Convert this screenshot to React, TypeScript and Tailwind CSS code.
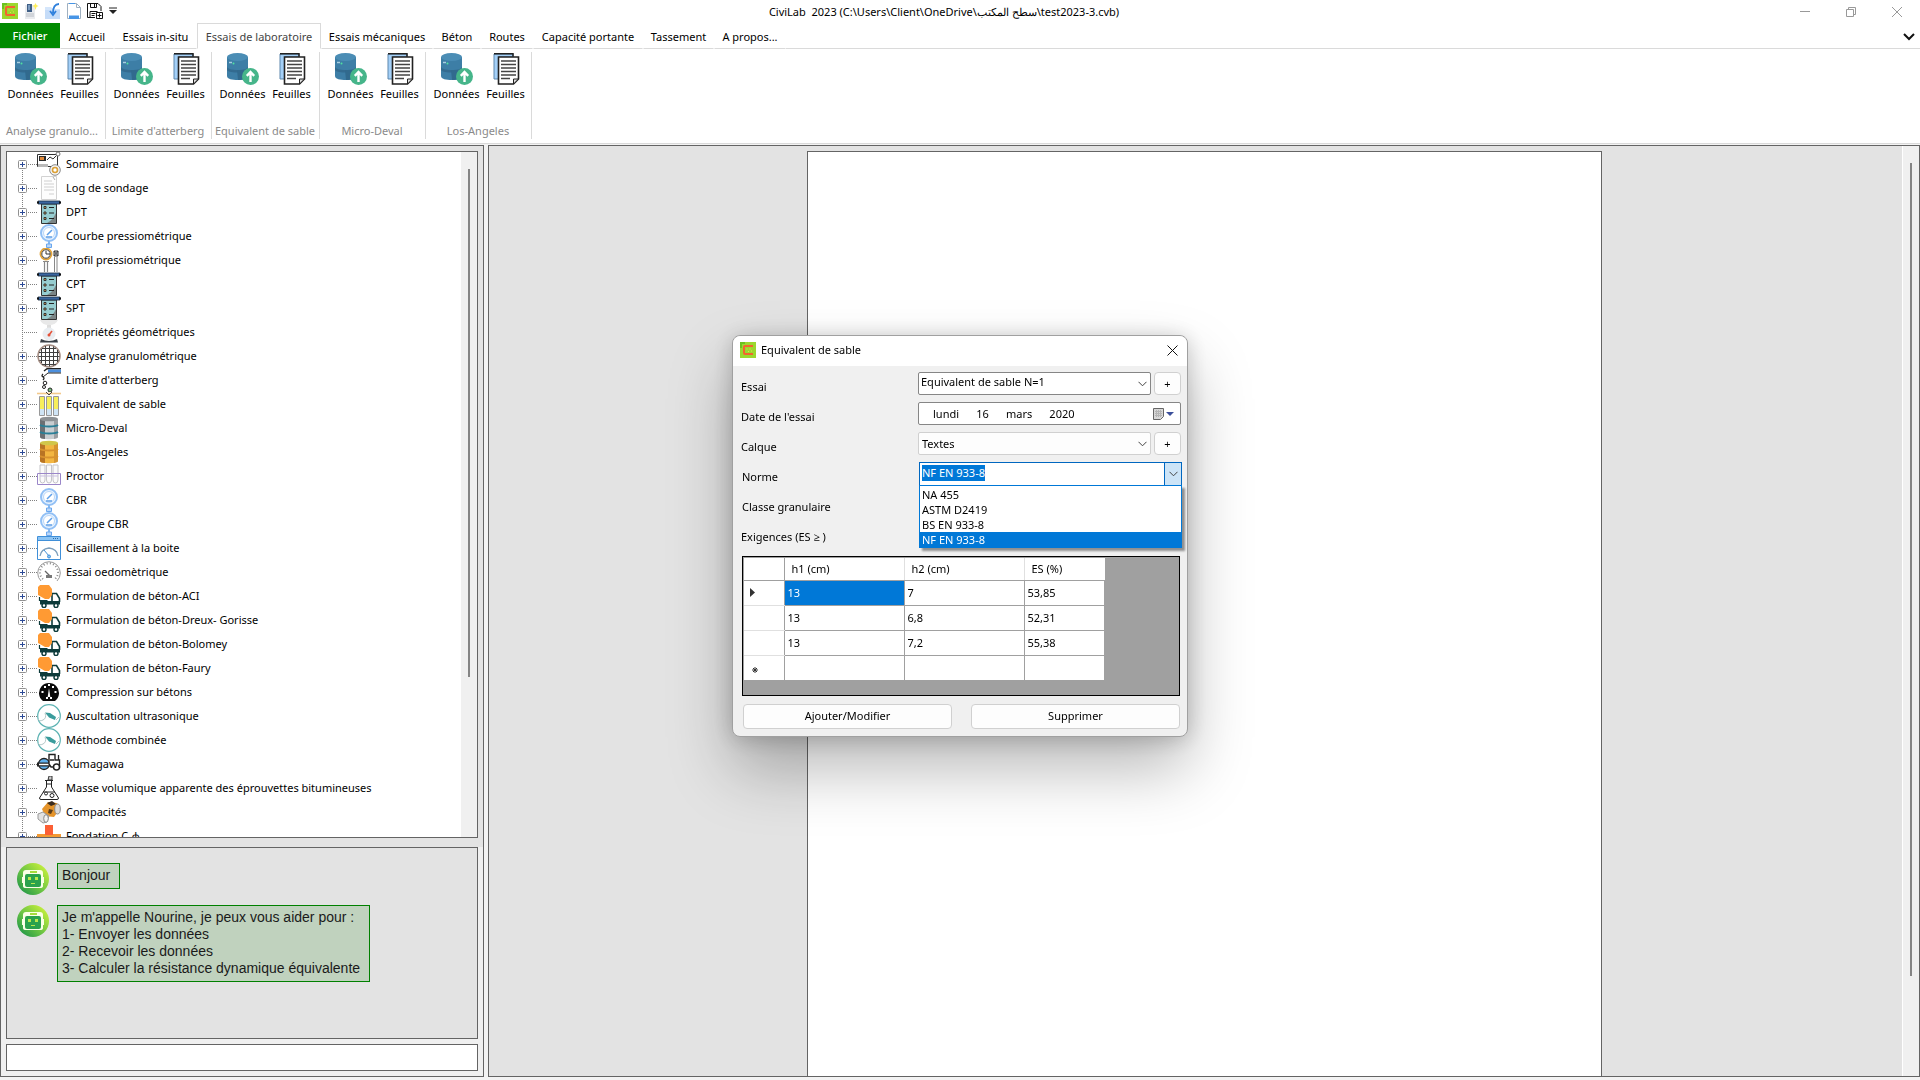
import React, { useEffect, useRef, useState } from "react";

type IconKind =
  | "summary"
  | "log"
  | "probe"
  | "gauge"
  | "profile"
  | "scale"
  | "sieve"
  | "limit"
  | "tubes"
  | "drumGray"
  | "drumGold"
  | "proctor"
  | "shear"
  | "oedo"
  | "mixer"
  | "dial"
  | "ultra"
  | "roller"
  | "flask"
  | "compactor"
  | "foundation";

interface TreeItem {
  label: string;
  icon: IconKind;
  leaf?: boolean;
}

const TREE_ITEMS: TreeItem[] = [
  { label: "Sommaire", icon: "summary" },
  { label: "Log de sondage", icon: "log" },
  { label: "DPT", icon: "probe" },
  { label: "Courbe pressiométrique", icon: "gauge" },
  { label: "Profil pressiométrique", icon: "profile" },
  { label: "CPT", icon: "probe" },
  { label: "SPT", icon: "probe" },
  { label: "Propriétés géométriques", icon: "scale", leaf: true },
  { label: "Analyse granulométrique", icon: "sieve" },
  { label: "Limite d'atterberg", icon: "limit" },
  { label: "Equivalent de sable", icon: "tubes" },
  { label: "Micro-Deval", icon: "drumGray" },
  { label: "Los-Angeles", icon: "drumGold" },
  { label: "Proctor", icon: "proctor" },
  { label: "CBR", icon: "gauge" },
  { label: "Groupe CBR", icon: "gauge" },
  { label: "Cisaillement à la boite", icon: "shear" },
  { label: "Essai oedomètrique", icon: "oedo" },
  { label: "Formulation de béton-ACI", icon: "mixer" },
  { label: "Formulation de béton-Dreux- Gorisse", icon: "mixer" },
  { label: "Formulation de béton-Bolomey", icon: "mixer" },
  { label: "Formulation de béton-Faury", icon: "mixer" },
  { label: "Compression sur bétons", icon: "dial" },
  { label: "Auscultation ultrasonique", icon: "ultra" },
  { label: "Méthode combinée", icon: "ultra" },
  { label: "Kumagawa", icon: "roller" },
  { label: "Masse volumique apparente des éprouvettes bitumineuses", icon: "flask" },
  { label: "Compacités", icon: "compactor" },
  { label: "Fondation C-φ", icon: "foundation" },
];

const TABS = [
  { label: "Accueil", width: "w-[54px]" },
  { label: "Essais in-situ", width: "w-[83px]" },
  { label: "Essais de laboratoire", width: "w-[124px]" },
  { label: "Essais mécaniques", width: "w-[112px]" },
  { label: "Béton", width: "w-[48px]" },
  { label: "Routes", width: "w-[52px]" },
  { label: "Capacité portante", width: "w-[110px]" },
  { label: "Tassement", width: "w-[71px]" },
  { label: "A propos...", width: "w-[72px]" },
];

const RIBBON_GROUPS = [
  { name: "Analyse granulo...", width: "w-[106px]" },
  { name: "Limite d'atterberg", width: "w-[106px]" },
  { name: "Equivalent de sable", width: "w-[108px]" },
  { name: "Micro-Deval", width: "w-[106px]" },
  { name: "Los-Angeles", width: "w-[106px]" },
];

const NORMS = ["NA 455", "ASTM D2419", "BS EN 933-8", "NF EN 933-8"];

const ROWS = [
  ["13", "7", "53,85"],
  ["13", "6,8", "52,31"],
  ["13", "7,2", "55,38"],
];

function AppLogo() {
  return (
    <svg width="16" height="16" viewBox="0 0 16 16" className="shrink-0">
      <rect width="16" height="16" fill="#9bd82f" />
      <path d="M0 0h5v2H2v4H0z" fill="#6cc11f" />
      <path d="M13 4H5Q4 4 4 5v6q0 1 1 1h8" fill="none" stroke="#f4632f" strokeWidth="2" />
      <path d="M6.500 7h1M9.500 7h1M11 9h1M8 9.500h1" stroke="#e6e04a" />
    </svg>
  );
}

function DataIcon() {
  return (
    <svg width="32" height="32" viewBox="0 0 32 32">
      <path d="M0 4v19c0 3 5 4 11 4s10-1 10-4V4z" fill="#3d7ea6" />
      <path d="M0 13c0 3 5 4 11 4s10-1 10-4v4c-2 2-6 2.500-10 2.500S1 19 0 17z" fill="#336b90" />
      <path d="M10 17h11v7c0 2-5 3-10 3z" fill="#316a8e" />
      <ellipse cx="10.500" cy="4" rx="10.500" ry="4" fill="#4b8db5" />
      <path d="M2 9.500h3" stroke="#a9cfe0" strokeWidth="1.500" />
      <circle cx="6.500" cy="10.500" r="1" fill="#4fe0a0" />
      <circle cx="23.500" cy="23.500" r="8.500" fill="#46b58a" />
      <path d="M23.500 29v-9M19.800 22.800l3.700-3.800 3.700 3.800" fill="none" stroke="#fff" strokeWidth="2.400" />
    </svg>
  );
}

function SheetsIcon() {
  return (
    <svg width="32" height="32" viewBox="0 0 32 32">
      <path d="M4 1h19v3H9v22H4z" fill="#a4d0f8" stroke="#5c87ad" strokeWidth="1" />
      <path d="M4 .8h19v3" fill="none" stroke="#222" strokeWidth="1.500" />
      <path d="M8.500 4h20v22l-5 5h-15z" fill="#fff" stroke="#222" strokeWidth="1.600" />
      <path
        d="M11 8h15M11 11.500h15M11 15h15M11 18.500h15M11 22h15M11 25.500h9"
        stroke="#444"
        strokeWidth="1.400"
      />
      <path d="M23.500 31v-5h5z" fill="#ddd" stroke="#222" />
    </svg>
  );
}

function QuickNew() {
  return (
    <svg width="15" height="16" viewBox="0 0 15 16">
      <path d="M1 2h10v14H1z" fill="#e9ebee" />
      <path d="M3 1h5v8H3z" fill="#3f5f86" />
      <path d="M4 2h2v5H4z" fill="#7d9dc0" />
      <path d="M2 11h8M2 13h8" stroke="#b9bec6" />
      <path d="M11.500 0l1 2 2 1-2 1-1 3-1-3-2-1 2-1z" fill="#ffef5a" />
    </svg>
  );
}

function QuickOpen() {
  return (
    <svg width="16" height="16" viewBox="0 0 16 16">
      <path d="M0 4h6l2 2h7v10H0z" fill="#d5e6fb" />
      <path d="M0 7h15v9H0z" fill="#c5dcf8" />
      <path d="M14 1Q8 1 8 10M5 8l3 4 3-4" fill="none" stroke="#2f80dc" strokeWidth="1.800" />
    </svg>
  );
}

function QuickDoc() {
  return (
    <svg width="14" height="16" viewBox="0 0 14 16">
      <path d="M.5.5h9l4 4v11H.5z" fill="#fff" stroke="#9fb0c0" />
      <path d="M9.500.5v4h4" fill="none" stroke="#9fb0c0" />
      <path d="M2 .5h6" stroke="#4795e6" />
      <path d="M2 12.500h10V16H2z" fill="#4795e6" />
    </svg>
  );
}

function QuickSave() {
  return (
    <svg width="16" height="16" viewBox="0 0 16 16" fill="none" stroke="#111">
      <path d="M14 8V3.500L11 .5H.5v14H8" />
      <path d="M3.500.5v4h6v-4M7.500 1v3M3 14V8.500h7.500M4.500 10.500h4M4.500 12.500h3" />
      <path d="M9.500 9.500h6v6h-6zM12.500 10.500v4M10.500 12.500h4" />
    </svg>
  );
}

function drum(body: string, dark: string, top: string, band: string) {
  return (
    <>
      <path d="M3 3v18c0 3 18 3 18 0V3z" fill={body} />
      <path d="M3 3v18c0 1 2 2 5 2V3z" fill={dark} />
      <path d="M17 4v19c3-.5 4-1 4-2V3z" fill={dark} opacity=".5" />
      <ellipse cx="12" cy="3" rx="9" ry="2.300" fill={top} />
      <path d="M3 9c3 2 15 2 18 0M3 16c3 2 15 2 18 0" fill="none" stroke={band} strokeWidth="2" />
    </>
  );
}

const ICONS: Record<IconKind, React.ReactNode> = {
  summary: (
    <>
      <path d="M.5 2.500h20v12H.5z" fill="#fff" stroke="#333" />
      <path d="M2 4h7v5H2z" fill="#2b2b2b" />
      <path d="M3 5h4v3H3z" fill="#e08a3c" />
      <path d="M1 12h10v3H1z" fill="#b9b9b9" />
      <path d="M10 8l3-3 3 2 5-5" fill="none" stroke="#333" />
      <circle cx="21" cy="2" r="2" fill="#fff" stroke="#777" />
      <circle cx="18" cy="18" r="5.300" fill="#f4f4f4" stroke="#8a8a8a" />
      <circle cx="18" cy="18" r="2.500" fill="#fff" stroke="#dba035" strokeWidth="1.600" />
    </>
  ),
  log: (
    <>
      <path d="M4.500.5h15v23h-15z" fill="#fdfdfd" stroke="#d2d2d2" />
      <path d="M7 5h8M7 8h10M7 11h10M7 14h10M12 18h5" stroke="#cfcfcf" />
      <path d="M16 1l2 3" stroke="#aaa" />
    </>
  ),
  probe: (
    <>
      <path d="M4.500 4h15v19.500h-15z" fill="#97cdd0" stroke="#333" />
      <path d="M19 13v10h-9q6-3 9-10z" fill="#7b8586" />
      <path d="M1 1h22v3H1z" fill="#3a66a0" stroke="#1b2d44" strokeWidth=".8" />
      <path d="M0 2.500h2M22 2.500h2" stroke="#111" strokeWidth="2" />
      <path d="M12 7.500h5M12 13h5M12 18.500h5" stroke="#222" />
      <path d="M7 6.500h2v2H7zM7 12h2v2H7zM7 17.500h2v2H7z" fill="#f2b25a" stroke="#333" />
    </>
  ),
  gauge: (
    <>
      <circle cx="12" cy="9" r="8" fill="#eaf4ff" stroke="#92c0f5" strokeWidth="2" />
      <circle cx="12" cy="9" r="5.500" fill="#fff" stroke="#b9d6f8" />
      <path d="M10 11l5-5M9 13h6" stroke="#5e9fe8" strokeWidth="1.500" />
      <path d="M11 17h2v3h-2z" fill="#86b9f2" />
      <path d="M9.500 20h5v3.500h-5z" fill="#b9d6f8" stroke="#6aa7ee" />
    </>
  ),
  profile: (
    <>
      <circle cx="9" cy="6" r="5.500" fill="#fff" stroke="#e2a43a" strokeWidth="1.800" />
      <circle cx="9" cy="6" r="4.200" fill="none" stroke="#444" />
      <path d="M9 3v3h4" fill="none" stroke="#333" />
      <path d="M6 13.500h6M7.500 14v10M10.500 14v10" stroke="#888" strokeWidth="1.200" />
      <path d="M17.500 9v15M20 9v15" stroke="#888" />
      <path d="M17 3h4v5h-4z" fill="#ccc" stroke="#333" />
      <path d="M17 3l4 5M21 3l-4 5" stroke="#333" strokeWidth=".8" />
    </>
  ),
  scale: (
    <>
      <path d="M3 0h18q-2 5-9 5T3 0z" fill="#e8e8e8" />
      <path d="M10 5h4v3h-4z" fill="#ddd" />
      <circle cx="12" cy="14" r="6.500" fill="#e9edf1" />
      <path d="M12 15l3-4" stroke="#e5533a" strokeWidth="1.600" />
      <circle cx="12" cy="15" r="1.500" fill="#e5533a" />
      <path d="M4 19q8 4 16 0l1 3.500H3z" fill="#3b4148" />
    </>
  ),
  sieve: (
    <>
      <circle cx="12" cy="12" r="11" fill="#fff" stroke="#a58e84" strokeWidth="1.600" />
      <path
        d="M4.500 5v14M8.500 2v20M12.500 1.500v21M16.500 2.500v19M20.500 6v12M5 4.500h14M2 8.500h20M1.500 12.500h21M2.500 16.500h19M5 20.500h14"
        stroke="#3f3f3f"
      />
    </>
  ),
  limit: (
    <>
      <path d="M24 .7H10L7 3" fill="none" stroke="#222" strokeWidth="1.400" />
      <path d="M11 1.500h13v3H11z" fill="#4c8fdd" />
      <path d="M24 5H11L6 9" fill="none" stroke="#222" />
      <path d="M6 6q-2 2 0 3t0 3" fill="none" stroke="#222" strokeWidth="1.300" />
      <circle cx="8" cy="15" r="1.800" fill="#fff" stroke="#222" />
      <circle cx="7" cy="19" r="1.500" fill="#fff" stroke="#222" />
      <circle cx="13" cy="22" r="2" fill="#7bc47f" stroke="#222" />
    </>
  ),
  tubes: (
    <>
      <path d="M0 1.500h24" stroke="#f3c98b" strokeWidth="1.600" />
      <path d="M2.500 4.500h5v19h-5zM9.500 4.500h5v19h-5zM16.500 4.500h5v19h-5z" fill="#cfe4f5" stroke="#999" />
      <path d="M3 5h4v12H3zM10 5h4v12h-4zM17 5h4v12h-4z" fill="#f7ee5b" />
      <path d="M9 0l3 3 3-3" fill="none" stroke="#444" />
    </>
  ),
  drumGray: drum("#c9cdd0", "#6b6f73", "#8d9194", "#2a7f97"),
  drumGold: drum("#f3b641", "#b87424", "#d1c64a", "#d8922f"),
  proctor: (
    <>
      <path
        d="M3 1h5v15q0 3-2.500 3T3 16zM9.500 1h5v15q0 3-2.500 3t-2.500-3zM16 1h5v15q0 3-2.500 3T16 16z"
        fill="#fafafa"
        stroke="#c4c4c9"
      />
      <path d="M.5 9.500h23v11H.5z" fill="none" stroke="#9a86c9" />
      <path d="M3 12h18" stroke="#c9bfe2" />
    </>
  ),
  shear: (
    <>
      <path d="M.5.5h23v23H.5z" fill="#fff" stroke="#3f8fd8" />
      <path d="M1 1h22v3.500H1z" fill="#8cc4f4" />
      <path d="M.5 4.500h23" stroke="#3f8fd8" />
      <path d="M16 2.500h6" stroke="#2c6aa8" strokeDasharray="1 1" />
      <path d="M3 20q1-7 9-8 8 1 9 8" fill="none" stroke="#7a9dbb" strokeWidth="1.300" />
      <path d="M7 14l5 6" stroke="#3f8fd8" />
      <circle cx="12" cy="20.500" r="1.500" fill="#8cc4f4" stroke="#3f8fd8" />
    </>
  ),
  oedo: (
    <>
      <path d="M4 21A11.300 11.300 0 1 1 20 21" fill="none" stroke="#9a9a9a" />
      <path d="M6 19A9 9 0 1 1 18 19" fill="none" stroke="#888" strokeWidth="2" strokeDasharray="1 2.200" />
      <path d="M8 11l5 5" stroke="#666" strokeWidth="1.200" />
      <path d="M9 15h6v3H9z" fill="#777" />
    </>
  ),
  mixer: (
    <>
      <path d="M15 17V9.500h4.500l3 5V18" fill="#fff" stroke="#0d3b3b" strokeWidth="1.600" />
      <path d="M3 17h20v3.500H3z" fill="#0d3b3b" />
      <path d="M2.500 13v3.500h8" fill="none" stroke="#0d3b3b" strokeWidth="1.200" />
      <path d="M3 1h9l3 4v6l-3 4H8L1 11V3z" fill="#ff9a33" />
      <circle cx="7" cy="21.500" r="2" fill="#fff" stroke="#0d3b3b" strokeWidth="1.500" />
      <circle cx="19" cy="21.500" r="2" fill="#fff" stroke="#0d3b3b" strokeWidth="1.500" />
    </>
  ),
  dial: (
    <>
      <path d="M6 21A10 10 0 1 1 18 21z" fill="#0a0a0a" />
      <path d="M12 8l1.300 9h-2.600z" fill="#fff" />
      <path
        d="M7 6h2v2H7zM15 6h2v2h-2zM11 4h2v2h-2zM4.500 11h2v2h-2zM17.500 11h2v2h-2zM9 17h2v2H9zM13 17h2v2h-2z"
        fill="#fff"
      />
    </>
  ),
  ultra: (
    <>
      <circle cx="12" cy="12" r="11.300" fill="#fff" stroke="#5db3b3" strokeWidth="1.200" />
      <path d="M8 8.500l5 .5 6 4-1 3-6-2.500z" fill="#3a9c9c" />
      <path d="M8 9q2 5-2 7t-5-1M19 16l3-3" fill="none" stroke="#b5c8c8" />
    </>
  ),
  roller: (
    <>
      <circle cx="7" cy="12" r="5.500" fill="#5fb0ee" stroke="#222" strokeWidth="1.300" />
      <path d="M0 12.500h13" stroke="#222" strokeWidth="4" />
      <path d="M2 12.500h10" stroke="#fff" strokeWidth="1.500" />
      <path d="M12 12V2.500h6V8h4.500v7H14z" fill="#fff" stroke="#222" strokeWidth="1.400" />
      <path d="M21.500 3v5M17 8h-4" stroke="#222" strokeWidth="1.300" />
      <circle cx="19.500" cy="15" r="3" fill="#fff" stroke="#222" strokeWidth="1.500" />
    </>
  ),
  flask: (
    <>
      <path d="M9.500 5v6L2.500 22q0 1.500 1.500 1.500h16q1.500 0 1.500-1.500l-7-11V5" fill="#fff" stroke="#222" />
      <path d="M8 4.500h8M9 8h6M6 16h12" stroke="#222" />
      <path d="M12 0h3v4h-4z" fill="#ccc" stroke="#333" />
      <circle cx="9" cy="17.500" r="1.500" fill="#fff" stroke="#222" />
      <circle cx="15" cy="19.500" r="2" fill="#fff" stroke="#222" />
    </>
  ),
  compactor: (
    <>
      <path d="M5 9l6-7 9 1 3 6-6 8-9-1z" fill="#e5942a" />
      <path d="M10 3l5-2 4 3-5 2z" fill="#3a2c20" />
      <path d="M12 9l4 1-2 4-3-1z" fill="#5b3c1a" />
      <ellipse cx="20.500" cy="9" rx="2.800" ry="5" fill="#dcdcdc" stroke="#888" />
      <path d="M1 14l5-2 6 4-2 6-4 1-5-4z" fill="#e2e2e2" stroke="#999" />
      <ellipse cx="9" cy="18.500" rx="2.300" ry="3.800" fill="#f3f3f3" stroke="#888" />
    </>
  ),
  foundation: (
    <>
      <path d="M0 10h24v5H0z" fill="#f39a33" />
      <path d="M8 1h8v10H8z" fill="#fb5f35" />
    </>
  ),
};

function Robot() {
  return (
    <svg width="32" height="32" viewBox="0 0 32 32" className="shrink-0">
      <defs>
        <linearGradient id="robot-bg" x1="1" y1="0" x2="0" y2="1">
          <stop offset="0.100" stopColor="#c8f03c" />
          <stop offset="0.600" stopColor="#5fbe44" />
          <stop offset="1" stopColor="#0e8a4a" />
        </linearGradient>
      </defs>
      <circle cx="16" cy="16" r="16" fill="url(#robot-bg)" />
      <path d="M6 10q0-3 3-3h14q3 0 3 3v4h1v6h-1v3q0 2-3 2H9q-3 0-3-2v-3H5v-6h1z" fill="#fbffe6" />
      <rect x="13" y="8" width="7" height="2" fill="#a5dc3c" />
      <rect x="8" y="11" width="16" height="13" rx="2" fill="#2ba24c" />
      <path d="M11 14h3v3h-3zM18 14h3v3h-3zM14 20h4v1h-4z" fill="#b9e84a" />
    </svg>
  );
}

function Chevron() {
  return (
    <svg width="9" height="6" viewBox="0 0 9 6" className="pointer-events-none">
      <path d="M.5.8l4 4 4-4" fill="none" stroke="#444" />
    </svg>
  );
}

function TitleBar() {
  return (
    <header className="flex h-[23px] shrink-0 items-center justify-between pb-1 pl-[2px]">
      <div className="flex flex-1 items-center gap-[6px] pt-[2px]">
        <AppLogo />
        <button aria-label="Nouveau"><QuickNew /></button>
        <button aria-label="Ouvrir"><QuickOpen /></button>
        <button aria-label="Document"><QuickDoc /></button>
        <button aria-label="Enregistrer sous"><QuickSave /></button>
        <button aria-label="Personnaliser">
          <svg width="8" height="8" viewBox="0 0 8 8">
            <path d="M0 1h8" stroke="#222" />
            <path d="M0 3h8L4 7z" fill="#222" />
          </svg>
        </button>
      </div>
      <h1 className="whitespace-pre pt-1 pr-4">{"CiviLab  2023 (C:\\Users\\Client\\OneDrive\\سطح المكتب\\test2023-3.cvb)"}</h1>
      <div className="flex flex-1 justify-end gap-9 pr-[18px] pt-[5px]">
        <button aria-label="Réduire">
          <svg width="10" height="10" viewBox="0 0 10 10"><path d="M0 4.500h10" stroke="#999" /></svg>
        </button>
        <button aria-label="Restaurer">
          <svg width="10" height="10" viewBox="0 0 10 10" fill="none" stroke="#999">
            <path d="M.5 2.500h7v7h-7zM2.500 2.500v-2h7v7h-2" />
          </svg>
        </button>
        <button aria-label="Fermer">
          <svg width="10" height="10" viewBox="0 0 10 10"><path d="M0 0l10 10M10 0L0 10" stroke="#999" /></svg>
        </button>
      </div>
    </header>
  );
}

function Ribbon() {
  const [activeTab, setActiveTab] = useState("Essais de laboratoire");

  return (
    <>
      <nav className="flex h-[26px] shrink-0">
        <button className="w-[60px] border-b border-[#dadada] bg-[#008a00] font-medium text-white">Fichier</button>
        {TABS.map((tab) => (
          <button
            key={tab.label}
            onClick={() => setActiveTab(tab.label)}
            className={`${tab.width} whitespace-nowrap border pt-[2px] ${
              tab.label === activeTab
                ? "border-[#dadada] border-b-transparent text-[#444]"
                : "border-transparent border-b-[#dadada]"
            }`}
          >
            {tab.label}
          </button>
        ))}
        <div className="flex flex-1 items-center justify-end border-b border-[#dadada] pr-[5px] pt-[2px]">
          <button aria-label="Réduire le ruban">
            <svg width="12" height="8" viewBox="0 0 12 8">
              <path d="M1 1l5 5 5-5" fill="none" stroke="#111" strokeWidth="2" />
            </svg>
          </button>
        </div>
      </nav>

      <div className="flex h-[95px] shrink-0 border-b border-[#dadada] pt-[3px]">
        {RIBBON_GROUPS.map((group) => (
          <section
            key={group.name}
            className={`${group.width} flex h-[87px] flex-col justify-between border-r border-[#dadada] pt-px`}
          >
            <div className="flex gap-[6px] pl-[7px]">
              <button className="flex w-[47px] flex-col items-center">
                <DataIcon />
                <span className="leading-[18px]">Données</span>
              </button>
              <button className="flex w-[39px] flex-col items-center">
                <SheetsIcon />
                <span className="leading-[18px]">Feuilles</span>
              </button>
            </div>
            <h2 className="whitespace-nowrap pr-px text-center leading-4 text-[#8a8a8a]">{group.name}</h2>
          </section>
        ))}
      </div>
    </>
  );
}

function TreeJoint({ first, leaf }: { first: boolean; leaf?: boolean }) {
  return (
    <svg width="10" height="24" viewBox="0 0 10 24" className="ml-[11px] shrink-0">
      <path d={first ? "M4.500 12v12" : "M4.500 0v24"} stroke="#808080" strokeDasharray="1 1" />
      {leaf ? (
        <path d="M4 12.500h6" stroke="#808080" strokeDasharray="1 1" />
      ) : (
        <>
          <rect x=".5" y="8.500" width="8" height="8" rx="1" fill="#fff" stroke="#919191" />
          <path d="M2 12.500h5M4.500 10v5" stroke="#2c4a96" />
        </>
      )}
    </svg>
  );
}

function TreeView() {
  return (
    <div className="flex min-h-0 flex-1 border border-[#646464] bg-white">
      <ul className="min-w-0 flex-1 overflow-hidden">
        {TREE_ITEMS.map((item, i) => (
          <li key={item.label} className="flex h-6 items-center">
            <TreeJoint first={i === 0} leaf={item.leaf} />
            <span className="w-[9px] shrink-0 border-t border-dotted border-[#808080]" />
            <svg width="24" height="24" viewBox="0 0 24 24" className="shrink-0">
              {ICONS[item.icon]}
            </svg>
            <span className="whitespace-nowrap pl-[5px]">{item.label}</span>
          </li>
        ))}
      </ul>
      <div className="flex w-4 justify-center bg-[#f0f0f0] pt-[17px]">
        <div className="h-[76%] w-[2px] bg-[#858585]" />
      </div>
    </div>
  );
}

function Message({ children }: { children: React.ReactNode }) {
  return (
    <div className="flex items-start gap-2">
      <Robot />
      <div className="whitespace-pre-line border border-[#008000] bg-[#c0d2be] pt-[3px] pr-[9px] pb-1 pl-1">{children}</div>
    </div>
  );
}

function Sidebar() {
  return (
    <aside className="flex w-[484px] shrink-0 flex-col border border-[#646464] bg-[#f0f0f0]">
      <div className="flex min-h-0 flex-1 bg-[#e3e3e3] px-[5px] pt-[5px] pb-[9px]">
        <TreeView />
      </div>
      <div className="flex flex-col gap-[5px] px-[5px] pb-[5px]">
        <div className="flex h-48 flex-col gap-[10px] border border-[#646464] bg-[#e3e3e3] px-[10px] pt-[15px] font-['Liberation_Sans',sans-serif] text-[14px] leading-[17px] text-[#1a1a1a]">
          <Message>Bonjour</Message>
          <Message>
            {
              "Je m'appelle Nourine, je peux vous aider pour :\n1- Envoyer les données\n2- Recevoir les données\n3- Calculer la résistance dynamique équivalente"
            }
          </Message>
        </div>
        <input aria-label="Message" className="h-[27px] border border-[#646464] bg-white px-1 outline-none" />
      </div>
    </aside>
  );
}

function AddButton({ label }: { label: string }) {
  return (
    <button aria-label={label} className="h-[23px] w-[27px] shrink-0 rounded border border-[#d0d0d0] bg-[#fdfdfd] leading-none">
      +
    </button>
  );
}

function NormField() {
  const inputRef = useRef<HTMLInputElement>(null);
  const [norm, setNorm] = useState("NF EN 933-8");

  useEffect(() => {
    inputRef.current?.select();
  }, []);

  return (
    <div className="relative ml-px h-6">
      <div className="flex h-6 border border-[#0067c0] bg-white">
        <input
          id="norme"
          ref={inputRef}
          value={norm}
          onChange={(e) => setNorm(e.target.value)}
          className="min-w-0 flex-1 pb-[2px] pl-[2px] outline-none selection:bg-[#0078d7] selection:text-white"
        />
        <button aria-label="Ouvrir la liste" className="flex w-[17px] items-center justify-center border-l border-[#0067c0] bg-[#cce4f7]">
          <Chevron />
        </button>
      </div>
      <select
        aria-label="Normes"
        size={4}
        value={norm}
        onChange={(e) => setNorm(e.target.value)}
        className="absolute top-[23px] left-0 z-10 h-[63px] w-full appearance-none overflow-hidden border border-[#0078d7] bg-white pt-px shadow-[3px_3px_2px_rgba(0,0,0,0.4)] outline-none"
      >
        {NORMS.map((n) => (
          <option
            key={n}
            className="h-[15px] py-0 pl-[2px] leading-[14px] text-black checked:bg-[#0078d7] checked:bg-linear-to-r checked:from-[#0078d7] checked:to-[#0078d7] checked:text-white"
          >
            {n}
          </option>
        ))}
      </select>
    </div>
  );
}

function SandDialog() {
  return (
    <div className="fixed inset-0 flex items-center justify-center pb-2">
      <div
        role="dialog"
        aria-label="Equivalent de sable"
        className="w-[456px] rounded-lg border border-[#a0a0a0] bg-[#f0f0f0] shadow-[0_32px_64px_rgba(0,0,0,0.28),0_2px_21px_rgba(0,0,0,0.2)]"
      >
        <div className="flex h-[30px] items-center gap-[5px] rounded-t-lg bg-white pr-[9px] pb-[2px] pl-[7px]">
          <AppLogo />
          <h2 className="flex-1">Equivalent de sable</h2>
          <button aria-label="Fermer">
            <svg width="11" height="11" viewBox="0 0 11 11"><path d="M.5.5l10 10M10.500.5l-10 10" stroke="#111" /></svg>
          </button>
        </div>

        <div className="pt-[6px] pr-[5px] pb-[7px] pl-2">
          <div className="grid auto-rows-[30px] grid-cols-[177px_264px]">
            <label htmlFor="essai" className="leading-[30px]">Essai</label>
            <div className="flex gap-[3px] pr-px">
              <div className="relative h-[23px] flex-1">
                <select id="essai" className="h-full w-full appearance-none rounded-[2px] border border-[#868686] bg-white pb-1 pl-[2px]">
                  <option>Equivalent de sable N=1</option>
                </select>
                <span className="pointer-events-none absolute top-[9px] right-1"><Chevron /></span>
              </div>
              <AddButton label="Ajouter un essai" />
            </div>

            <label htmlFor="date" className="leading-[30px]">Date de l'essai</label>
            <div className="mr-px flex h-[23px] items-center rounded-[2px] border border-[#868686] bg-white pr-[6px]">
              <input
                id="date"
                defaultValue={"lundi      16      mars      2020"}
                className="min-w-0 flex-1 pl-[14px] whitespace-pre outline-none"
              />
              <button aria-label="Ouvrir le calendrier" className="flex items-center gap-[2px]">
                <svg width="11" height="12" viewBox="0 0 11 12">
                  <path d="M.5.5h10v8l-3 3h-7z" fill="#d8d8d8" stroke="#666" />
                  <path d="M2 3.500h7M2 5.500h7M2 7.500h7M3.500 2v7M5.500 2v7M7.500 2v7" stroke="#b5b5b5" />
                </svg>
                <svg width="8" height="4" viewBox="0 0 8 4"><path d="M0 0h8L4 4z" fill="#3b4f9a" /></svg>
              </button>
            </div>

            <label htmlFor="calque" className="leading-[30px]">Calque</label>
            <div className="flex gap-[3px] pr-px">
              <div className="relative h-[23px] flex-1">
                <select id="calque" className="h-full w-full appearance-none rounded-[2px] border border-[#d0d0d0] bg-[#fdfdfd] pl-[3px]">
                  <option>Textes</option>
                </select>
                <span className="pointer-events-none absolute top-[9px] right-1"><Chevron /></span>
              </div>
              <AddButton label="Ajouter un calque" />
            </div>

            <label htmlFor="norme" className="pl-px leading-[30px]">Norme</label>
            <NormField />

            <span className="col-span-2 pl-px leading-[30px]">Classe granulaire</span>
            <span className="col-span-2 leading-[30px]">Exigences (ES ≥ )</span>
          </div>

          <div className="mt-1 ml-px h-[140px] w-[438px] border border-black bg-[#a0a0a0] p-px">
            <table className="table-fixed border-collapse bg-white">
              <thead>
                <tr className="h-[22px]">
                  <th className="w-10 border-r border-b border-[#a0a0a0]" />
                  <th className="w-[120px] border-r border-b border-r-[#e0e0e0] border-b-[#a0a0a0] pl-[7px] text-left font-normal">h1 (cm)</th>
                  <th className="w-[120px] border-r border-b border-r-[#e0e0e0] border-b-[#a0a0a0] pl-[7px] text-left font-normal">h2 (cm)</th>
                  <th className="w-[80px] border-b border-[#a0a0a0] pl-[7px] text-left font-normal">ES (%)</th>
                </tr>
              </thead>
              <tbody>
                {ROWS.map((row, r) => (
                  <tr key={r} className="h-[25px]">
                    <th className="border-r border-b border-r-[#a0a0a0] border-b-[#e0e0e0] pl-[6px]">
                      {r === 0 && (
                        <svg width="5" height="9" viewBox="0 0 5 9"><path d="M0 0l5 4.500L0 9z" fill="#333" /></svg>
                      )}
                    </th>
                    {row.map((value, c) => (
                      <td
                        key={c}
                        className={`border-r border-b border-[#a0a0a0] pl-[3px] ${
                          r === 0 && c === 0 ? "bg-[#0078d7] text-white" : ""
                        }`}
                      >
                        {value}
                      </td>
                    ))}
                  </tr>
                ))}
                <tr className="h-[25px]">
                  <th className="border-r border-[#a0a0a0] pt-1 pl-2">
                    <svg width="6" height="6" viewBox="0 0 6 6">
                      <path d="M3 0v6M0 3h6M1 1l4 4M5 1L1 5" stroke="#333" />
                    </svg>
                  </th>
                  <td className="border-r border-[#a0a0a0]" />
                  <td className="border-r border-[#a0a0a0]" />
                  <td className="border-r border-[#a0a0a0]" />
                </tr>
              </tbody>
            </table>
          </div>

          <div className="mt-2 ml-[2px] grid w-[437px] grid-cols-2 gap-[19px]">
            <button className="h-[25px] rounded border border-[#d0d0d0] bg-[#fdfdfd] pb-[2px]">Ajouter/Modifier</button>
            <button className="h-[25px] rounded border border-[#d0d0d0] bg-[#fdfdfd] pb-[2px]">Supprimer</button>
          </div>
        </div>
      </div>
    </div>
  );
}

export default function App() {
  return (
    <div className="flex h-screen flex-col overflow-hidden bg-white font-['Noto_Sans','Open_Sans',sans-serif] text-[11px] leading-4 text-black">
      <TitleBar />
      <Ribbon />

      <main className="flex min-h-0 flex-1 gap-1 bg-[#f3f3f3] pt-px pb-[3px]">
        <Sidebar />
        <div className="flex flex-1 border border-[#646464] bg-[#e3e3e3]">
          <div className="flex flex-1 justify-center pt-[5px] pl-[18px]">
            <div className="w-[795px] border border-b-0 border-[#646464] bg-white" />
          </div>
          <div className="flex w-[17px] justify-center border-l border-white bg-[#f0f0f0] pt-[17px]">
            <div className="h-[89%] w-[2px] bg-[#858585]" />
          </div>
        </div>
      </main>

      <SandDialog />
    </div>
  );
}
